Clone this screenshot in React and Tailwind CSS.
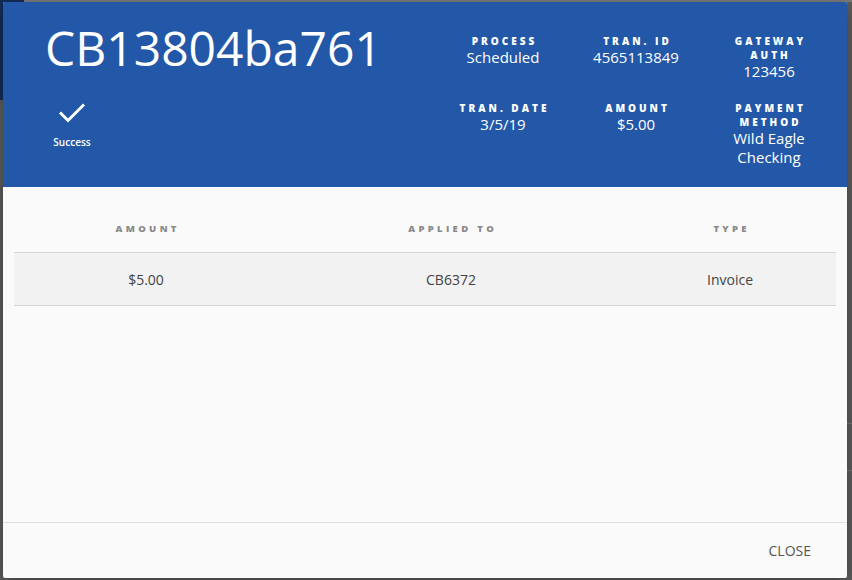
import React from "react";

function Field({ label, value }) {
  return (
    <div className="flex w-[100px] flex-col items-center text-center">
      <div className="text-[10px] font-extrabold uppercase leading-[14px] tracking-[0.3em] text-white [padding-left:0.3em]">
        {label}
      </div>
      <div className="text-[15px] leading-[19px] text-white">{value}</div>
    </div>
  );
}

export default function App() {
  return (
    <div
      className="relative h-[580px] w-[852px] overflow-hidden bg-[#5d5d5d]"
      style={{ fontFamily: '"Open Sans", "Noto Sans", sans-serif' }}
    >
      {/* background page hints */}
      <div className="absolute left-0 top-0 h-[100px] w-[24px] bg-[#132d59]" />
      <div className="absolute left-[24px] top-0 h-[2px] w-[828px] bg-[#7b7b7b]" />
      <div className="absolute right-0 top-[423px] h-px w-[6px] bg-[#777]" />
      <div className="absolute right-0 top-[470px] h-px w-[6px] bg-[#777]" />

      {/* modal */}
      <div className="absolute left-[3px] top-[2px] flex h-[576px] w-[844px] flex-col overflow-hidden rounded-[2px] bg-[#fafafa] shadow-[0_4px_16px_rgba(0,0,0,0.35)]">
        <div className="flex h-[185px] shrink-0 justify-between bg-[#2358a8]">
          <div className="flex flex-col pl-[42px] pt-[22px]">
            <div className="text-[48px] font-normal leading-[48px] text-white">CB13804ba761</div>
            <div className="mt-[31px] flex w-[54px] flex-col items-center">
              <svg width="26" height="20" viewBox="0 0 26 20" fill="none">
                <path d="M2 10.5 L9 17.5 L24 2.5" stroke="white" strokeWidth="3" strokeLinecap="square" />
              </svg>
              <div className="mt-[12px] text-[10px] font-semibold leading-[14px] text-white">Success</div>
            </div>
          </div>
          <div className="grid grid-cols-[100px_100px_100px] gap-x-[33px] gap-y-[20px] self-start pr-[28px] pt-[32px]">
            <Field label="Process" value="Scheduled" />
            <Field label="Tran. ID" value="4565113849" />
            <Field label="Gateway Auth" value="123456" />
            <Field label="Tran. Date" value="3/5/19" />
            <Field label="Amount" value="$5.00" />
            <Field label="Payment Method" value={<>Wild Eagle<br />Checking</>} />
          </div>
        </div>

        <div className="flex-1 px-[11px] pt-[35px]">
          <div className="grid grid-cols-[264px_346px_212px] border-b border-[#d6d6d6] pb-[16px] text-center text-[9.5px] font-extrabold uppercase leading-[14px] tracking-[0.35em] text-[#8a8a8a]">
            <div className="[padding-left:0.35em]">Amount</div>
            <div className="[padding-left:0.35em]">Applied To</div>
            <div className="[padding-left:0.35em]">Type</div>
          </div>
          <div className="grid h-[53px] grid-cols-[264px_346px_212px] items-center border-b border-[#d6d6d6] bg-[#f2f2f2] text-center text-[14px] text-[#444]">
            <div>$5.00</div>
            <div>CB6372</div>
            <div>Invoice</div>
          </div>
        </div>

        <div className="flex h-[56px] shrink-0 items-center justify-end border-t border-[#e0e0e0] pr-[36px]">
          <button className="text-[14px] uppercase text-[#555]">Close</button>
        </div>
      </div>
    </div>
  );
}
